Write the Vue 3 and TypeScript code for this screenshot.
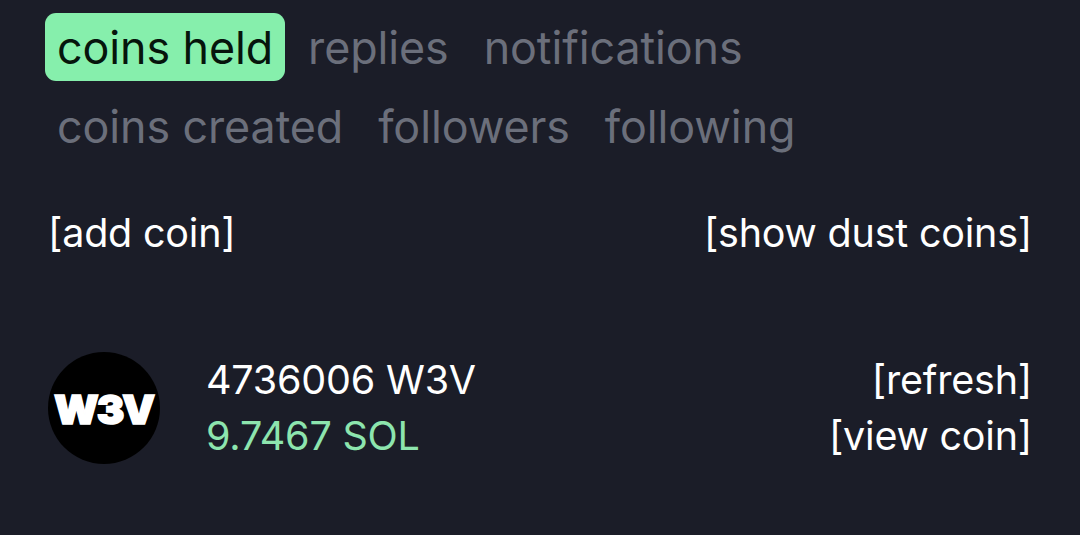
<template>
  <main class="profile">
    <nav class="tabs">
      <button
        v-for="tab in tabs"
        :key="tab"
        type="button"
        class="tab"
        :class="{ active: tab === activeTab }"
        @click="activeTab = tab"
      >{{ tab }}</button>
    </nav>

    <div class="toolbar">
      <button type="button" class="link">[add coin]</button>
      <button type="button" class="link">[show dust coins]</button>
    </div>

    <section v-for="coin in coins" :key="coin.symbol" class="coin">
      <svg class="logo" viewBox="0 0 112 112">
        <circle cx="56" cy="56" r="56" fill="#000" />
        <text class="logo-text" x="6" y="72" textLength="99" lengthAdjust="spacingAndGlyphs">{{ coin.symbol }}</text>
      </svg>
      <div class="balance">
        <div>{{ coin.amount }} {{ coin.symbol }}</div>
        <div class="value">{{ coin.value }} SOL</div>
      </div>
      <div class="actions">
        <button type="button" class="link">[refresh]</button>
        <button type="button" class="link">[view coin]</button>
      </div>
    </section>
  </main>
</template>

<script setup lang="ts">
import { ref } from 'vue'

interface Coin {
  symbol: string
  amount: number
  value: number
}

const tabs = ['coins held', 'replies', 'notifications', 'coins created', 'followers', 'following']
const activeTab = ref('coins held')

const coins: Coin[] = [{ symbol: 'W3V', amount: 4736006, value: 9.7467 }]
</script>

<style>
body {
  background: #1b1d28;
}
</style>

<style scoped>
.profile {
  box-sizing: border-box;
  width: 1080px;
  height: 535px;
  padding: 13.4px 48px 0 45px;
  overflow: hidden;
  color: #fff;
  font-family: Inter, sans-serif;
  font-size: 39.5px;
  line-height: 56px;
}

button {
  padding: 0;
  border: none;
  background: none;
  color: inherit;
  font: inherit;
  cursor: pointer;
}

.tabs {
  display: flex;
  flex-wrap: wrap;
  gap: 11px;
  width: 860px;
}

.tab {
  height: 68px;
  padding: 0 12px;
  border-radius: 11px;
  color: #6b6f7b;
  font-size: 44.8px;
  letter-spacing: -0.08px;
  line-height: 70px;
  white-space: nowrap;
}

.tab.active {
  background: #86efac;
  color: #06150c;
}

.toolbar {
  display: flex;
  justify-content: space-between;
  margin-top: 44.6px;
  padding-left: 3px;
}

.link {
  letter-spacing: -0.22px;
}

.coin {
  display: flex;
  align-items: center;
  margin-top: 91px;
  padding-left: 3px;
}

.logo {
  width: 112px;
  height: 112px;
}

.logo-text {
  fill: #fff;
  stroke: #fff;
  stroke-width: 1.6px;
  font-size: 40px;
  font-weight: 900;
  letter-spacing: -2px;
}

.balance {
  margin-left: 46px;
  letter-spacing: -0.2px;
}

.value {
  color: #8de5ae;
}

.actions {
  display: flex;
  flex-direction: column;
  align-items: flex-end;
  margin-left: auto;
}
</style>
